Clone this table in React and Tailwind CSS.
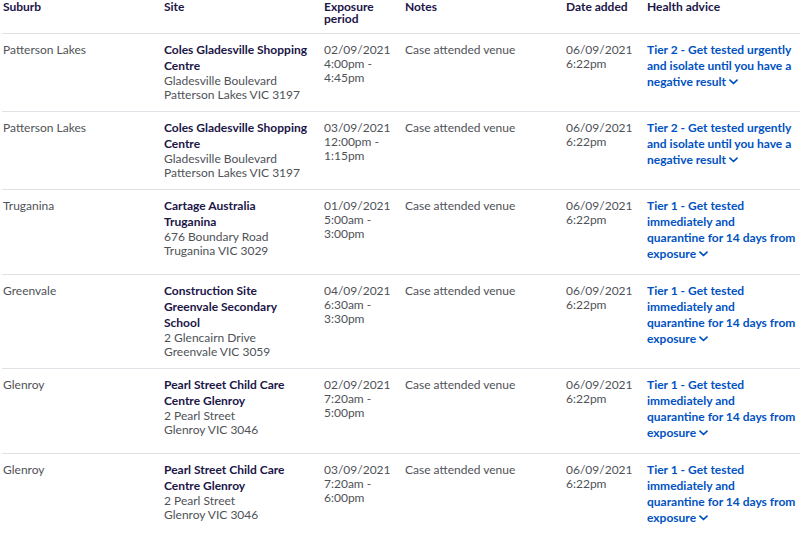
import React from 'react';

const rows = [
  {
    suburb: 'Patterson Lakes',
    site: ['Coles Gladesville Shopping', 'Centre'],
    address: ['Gladesville Boulevard', 'Patterson Lakes VIC 3197'],
    period: ['02/09/2021', '4:00pm -', '4:45pm'],
    advice: ['Tier 2 - Get tested urgently', 'and isolate until you have a', 'negative result'],
  },
  {
    suburb: 'Patterson Lakes',
    site: ['Coles Gladesville Shopping', 'Centre'],
    address: ['Gladesville Boulevard', 'Patterson Lakes VIC 3197'],
    period: ['03/09/2021', '12:00pm -', '1:15pm'],
    advice: ['Tier 2 - Get tested urgently', 'and isolate until you have a', 'negative result'],
  },
  {
    suburb: 'Truganina',
    site: ['Cartage Australia', 'Truganina'],
    address: ['676 Boundary Road', 'Truganina VIC 3029'],
    period: ['01/09/2021', '5:00am -', '3:00pm'],
    advice: ['Tier 1 - Get tested', 'immediately and', 'quarantine for 14 days from', 'exposure'],
  },
  {
    suburb: 'Greenvale',
    site: ['Construction Site', 'Greenvale Secondary', 'School'],
    address: ['2 Glencairn Drive', 'Greenvale VIC 3059'],
    period: ['04/09/2021', '6:30am -', '3:30pm'],
    advice: ['Tier 1 - Get tested', 'immediately and', 'quarantine for 14 days from', 'exposure'],
  },
  {
    suburb: 'Glenroy',
    site: ['Pearl Street Child Care', 'Centre Glenroy'],
    address: ['2 Pearl Street', 'Glenroy VIC 3046'],
    period: ['02/09/2021', '7:20am -', '5:00pm'],
    advice: ['Tier 1 - Get tested', 'immediately and', 'quarantine for 14 days from', 'exposure'],
  },
  {
    suburb: 'Glenroy',
    site: ['Pearl Street Child Care', 'Centre Glenroy'],
    address: ['2 Pearl Street', 'Glenroy VIC 3046'],
    period: ['03/09/2021', '7:20am -', '6:00pm'],
    advice: ['Tier 1 - Get tested', 'immediately and', 'quarantine for 14 days from', 'exposure'],
  },
];

const Chevron = () => (
  <svg className="inline-block ml-[3px] mb-[1px]" width="9" height="6" viewBox="0 0 9 6" fill="none">
    <path d="M1 1.2 L4.5 4.5 L8 1.2" stroke="#0052c2" strokeWidth="1.7" strokeLinecap="round" strokeLinejoin="round" />
  </svg>
);

const Lines = ({ items }) => items.map((t, i) => <div key={i}>{t}</div>);

export default function App() {
  return (
    <div className="w-[800px] h-[533px] overflow-hidden bg-white pl-[2px]" style={{ fontFamily: 'Lato, "Liberation Sans", sans-serif' }}>
      <table className="w-[798px] table-fixed border-collapse">
        <colgroup>
          <col className="w-[161px]" />
          <col className="w-[160px]" />
          <col className="w-[81px]" />
          <col className="w-[161px]" />
          <col className="w-[81px]" />
          <col />
        </colgroup>
        <thead>
          <tr className="border-b border-[#dfe2e6] text-[#201547] text-[12px] font-bold leading-[12px] align-top text-left">
            <th className="pl-[1px] pt-[1px] pb-[8px]">Suburb</th>
            <th className="pl-[1px] pt-[1px] pb-[8px]">Site</th>
            <th className="pl-[1px] pt-[1px] pb-[8px]">Exposure<br />period</th>
            <th className="pl-[1px] pt-[1px] pb-[8px]">Notes</th>
            <th className="pl-[1px] pt-[1px] pb-[8px]">Date added</th>
            <th className="pl-[1px] pt-[1px] pb-[8px]">Health advice</th>
          </tr>
        </thead>
        <tbody>
          {rows.map((r, i) => (
            <tr key={i} className="border-b border-[#dfe2e6] align-top text-[12px] text-[#4f5257] leading-[14px]">
              <td className="pl-[1px] pt-[8px] pb-[9px]">
                <div className="pt-[1px]">{r.suburb}</div>
              </td>
              <td className="pl-[1px] pt-[8px] pb-[9px]">
                <div className="font-bold text-[#201547] leading-[16px]">
                  <Lines items={r.site} />
                </div>
                <Lines items={r.address} />
              </td>
              <td className="pl-[1px] pt-[8px] pb-[9px]">
                <div className="pt-[1px]">
                  <Lines items={r.period} />
                </div>
              </td>
              <td className="pl-[1px] pt-[8px] pb-[9px]">
                <div className="pt-[1px]">Case attended venue</div>
              </td>
              <td className="pl-[1px] pt-[8px] pb-[9px]">
                <div className="pt-[1px]">
                  <div>06/09/2021</div>
                  <div>6:22pm</div>
                </div>
              </td>
              <td className="pl-[1px] pt-[8px] pb-[9px]">
                <div className="font-bold text-[#0052c2] leading-[16px] pb-[3px]">
                  {r.advice.map((t, j) => (
                    <div key={j}>
                      {t}
                      {j === r.advice.length - 1 && <Chevron />}
                    </div>
                  ))}
                </div>
              </td>
            </tr>
          ))}
        </tbody>
      </table>
    </div>
  );
}
